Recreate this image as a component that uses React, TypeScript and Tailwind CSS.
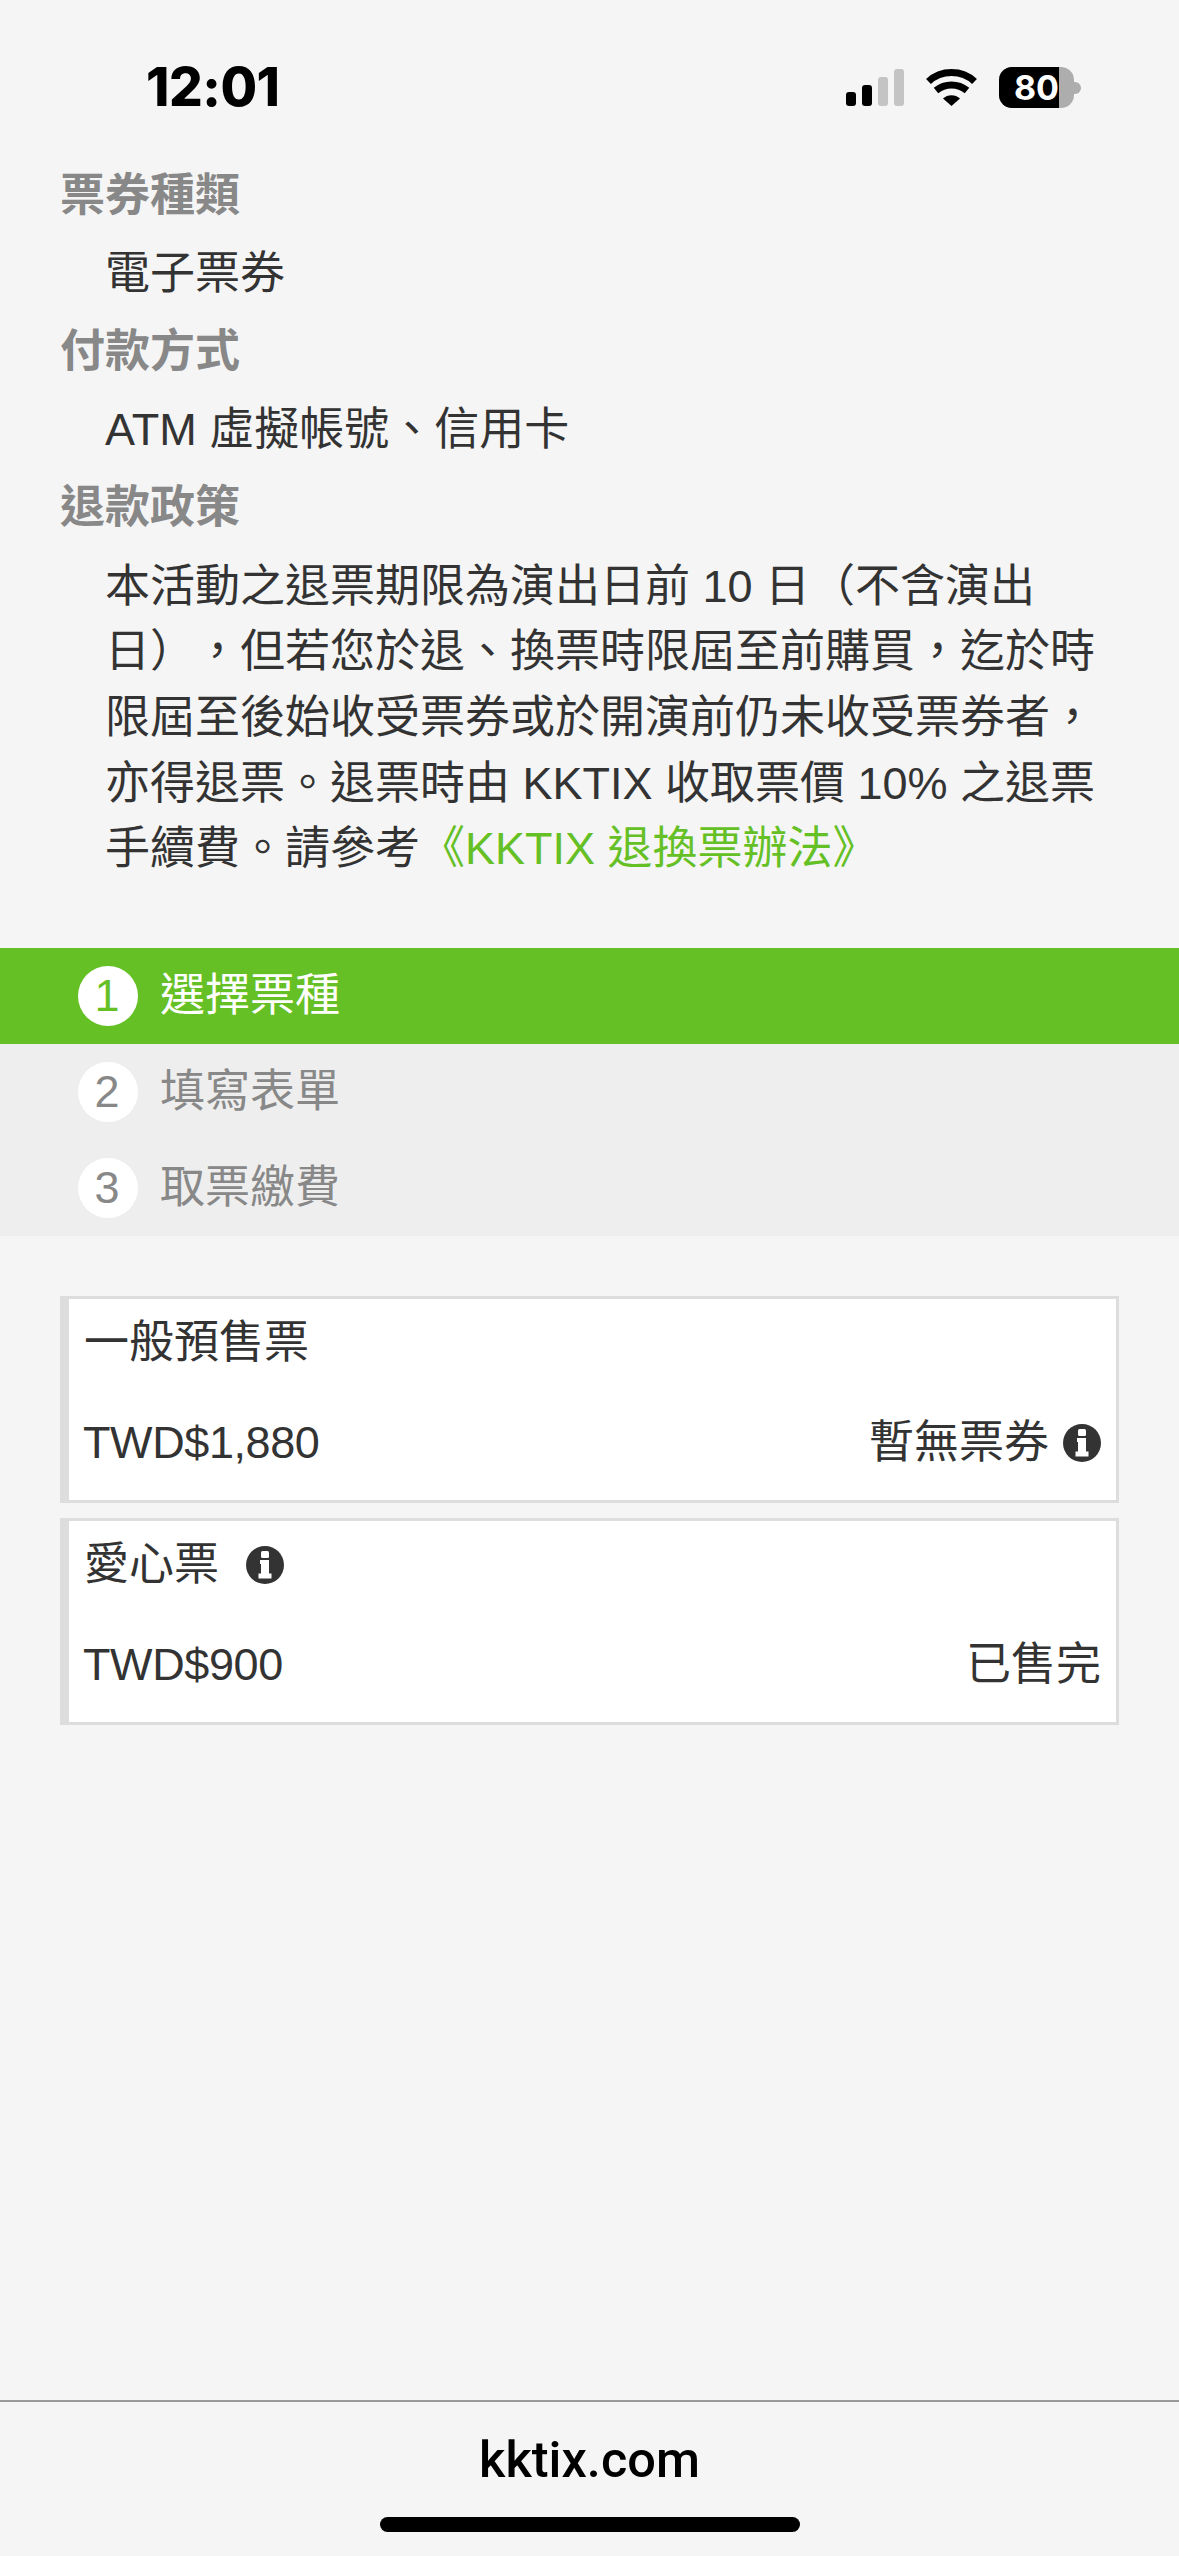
const font = { fontFamily: '"Liberation Sans", "Noto Sans CJK TC", sans-serif' };

function StatusBar() {
  return (
    <div className="flex h-[163px] shrink-0 items-start justify-between pl-[146px] pr-[105px] pt-[59px]">
      <span className="font-['Inter',sans-serif] text-[53px] font-extrabold leading-[56px] tracking-[-0.5px] text-black">
        12:01
      </span>
      <div className="flex items-center gap-[22px] pt-[8px]">
        <svg width="58" height="37" viewBox="0 0 58 37" fill="#000">
          <rect x="0" y="23" width="10" height="14" rx="3" />
          <rect x="16" y="16" width="10" height="21" rx="3" />
          <rect x="32" y="8" width="10" height="29" rx="3" fill="#c4c4c4" />
          <rect x="48" y="0" width="10" height="37" rx="3" fill="#c4c4c4" />
        </svg>
        <svg width="51" height="37" viewBox="0 0 51 37" fill="none" stroke="#000" strokeWidth="7">
          <path d="M2.500 12.500C15 0.500 36 0.500 48.500 12.500" />
          <path d="M10 21.500C19 14 32 14 41 21.500" />
          <path d="M17 29.500C21.500 25 29.500 25 34 29.500L25.500 37Z" fill="#000" stroke="none" />
        </svg>
        <div className="relative h-[41px] w-[75px] rounded-[13px] bg-[#adadad]">
          <div className="flex h-full w-[60px] items-center justify-end overflow-hidden rounded-l-[13px] bg-black font-['Inter',sans-serif] text-[34px] font-bold leading-none text-white">
            80
          </div>
          <div className="absolute -right-[7px] top-[15px] h-[12px] w-[7px] rounded-r-full bg-[#adadad]" />
        </div>
      </div>
    </div>
  );
}

function Info() {
  return (
    <svg width="38" height="38" viewBox="0 0 38 38" className="shrink-0">
      <circle cx="19" cy="19" r="19" fill="#333" />
      <rect x="15" y="5" width="8" height="7" rx="1.500" fill="#fff" />
      <path d="M14 14H23V27.500H25.500V32.500H12.500V27.500H15V18H14Z" fill="#fff" />
    </svg>
  );
}

function Step({ n, label, active }: { n: number; label: string; active?: boolean }) {
  return (
    <div className={`flex h-[96px] items-center gap-[22px] pl-[78px] ${active ? "bg-[#65c025] text-white" : "text-[#888]"}`}>
      <span className={`flex h-[60px] w-[60px] items-center justify-center rounded-full bg-white pr-[2px] text-[45px] ${active ? "text-[#65c025]" : "text-[#888]"}`}>
        {n}
      </span>
      <span className="text-[45px]">{label}</span>
    </div>
  );
}

function Ticket({ children, price, status }: { children: React.ReactNode; price: string; status: React.ReactNode }) {
  return (
    <div className="flex h-[207px] flex-col border-[3px] border-l-[9px] border-[#ddd] bg-white pl-[15px] pr-[15px] pt-[12px] text-[#333]">
      <div className="flex h-[64px] items-center gap-[27px] text-[45px]">{children}</div>
      <div className="mt-[36px] flex h-[64px] items-center justify-between text-[45px]">
        <span className="-ml-px tracking-[-0.4px]">{price}</span>
        {status}
      </div>
    </div>
  );
}

export default function App() {
  return (
    <div style={font} className="flex h-[2556px] w-[1179px] flex-col overflow-hidden bg-[#f5f5f5] [text-spacing-trim:space-all]">
      <StatusBar />
      <dl className="px-[60px] text-[45px] leading-[65.700px]">
        <dt className="font-bold text-[#888]">票券種類</dt>
        <dd className="mt-[12px] pl-[45px] text-[#333]">電子票券</dd>
        <dt className="mt-[13px] font-bold text-[#888]">付款方式</dt>
        <dd className="mt-[12px] pl-[45px] text-[#333]">ATM 虛擬帳號、信用卡</dd>
        <dt className="mt-[12px] font-bold text-[#888]">退款政策</dt>
        <dd className="mt-[13px] pl-[45px] text-[#333]">
          本活動之退票期限為演出日前 10 日（不含演出日），但若您於退、換票時限屆至前購買，迄於時限屆至後始收受票券或於開演前仍未收受票券者，亦得退票。退票時由 KKTIX 收取票價 10% 之退票手續費。請參考
          <span className="text-[#65c025]">《KKTIX 退換票辦法》</span>
        </dd>
      </dl>

      <div className="mt-[66px] bg-[#eee]">
        <Step n={1} label="選擇票種" active />
        <Step n={2} label="填寫表單" />
        <Step n={3} label="取票繳費" />
      </div>

      <div className="mt-[60px] flex flex-col gap-[15px] px-[60px]">
        <Ticket
          price="TWD$1,880"
          status={
            <span className="flex items-center gap-[14px]">
              暫無票券
              <Info />
            </span>
          }
        >
          一般預售票
        </Ticket>
        <Ticket price="TWD$900" status={<span>已售完</span>}>
          愛心票
          <Info />
        </Ticket>
      </div>

      <div className="mt-auto flex h-[156px] flex-col items-center border-t-[2px] border-[#999]">
        <span className="mt-[30px] font-['Roboto',sans-serif] text-[50.500px] font-medium leading-[56px] text-black">kktix.com</span>
        <div className="mt-[29px] h-[15px] w-[420px] rounded-full bg-black" />
      </div>
    </div>
  );
}
